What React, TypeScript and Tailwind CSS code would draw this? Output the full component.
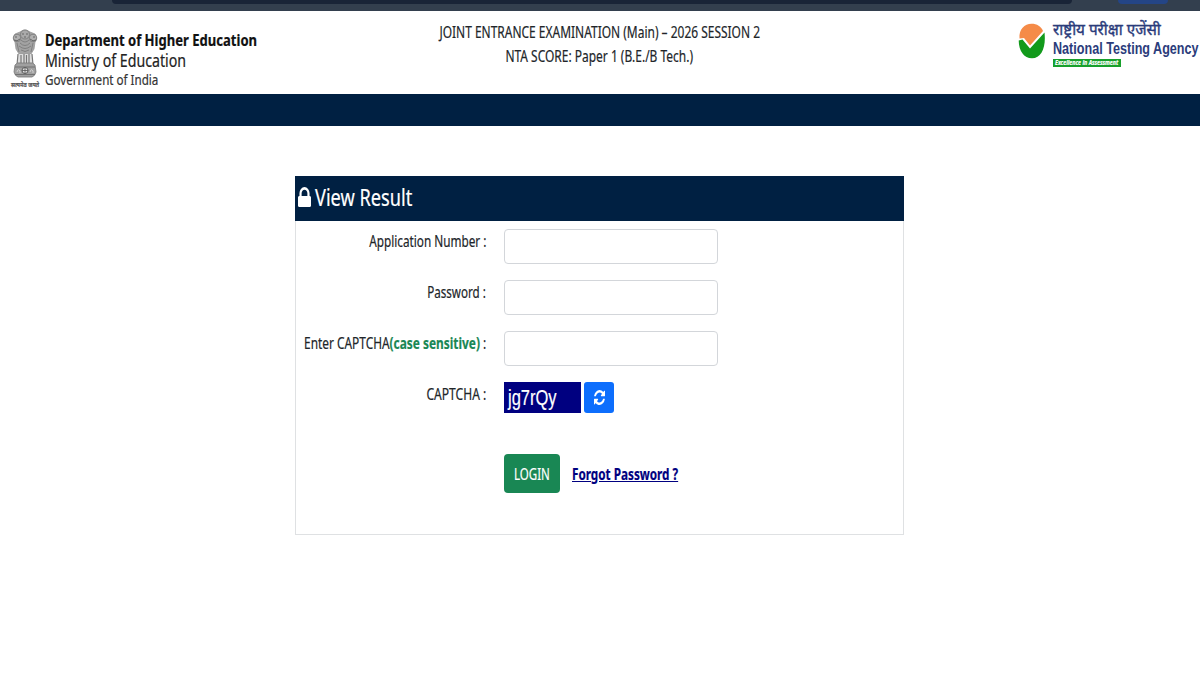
import { useState, type ReactNode } from "react";

// Narrow text: the box keeps its own width, the glyphs are squeezed inside it
function Narrow({ children, className = "", scale }: { children: ReactNode; className?: string; scale: string }) {
  return (
    <div className={`flex whitespace-nowrap ${className}`}>
      <span className={`block shrink-0 ${scale}`}>{children}</span>
    </div>
  );
}

function Emblem() {
  return (
    <svg viewBox="0 0 26 49" className="h-[49px] w-[26px]" fill="none" stroke="#777" strokeWidth="0.8">
      <path d="M8 3 Q13-1 18 3 L23 5 Q26 9 23 13 L22 20 L19 25 L7 25 L4 20 L3 13 Q0 9 3 5 Z" fill="#a3a3a3" stroke="#999" />
      <circle cx="13" cy="5.500" r="4.500" fill="#aaa" />
      <circle cx="5" cy="9" r="3.800" fill="#b0b0b0" />
      <circle cx="21" cy="9" r="3.800" fill="#b0b0b0" />
      <path d="M10 5h2M14 5h2M12 8h2M3 8h2M21 8h2M2 11q3 2 6-1M24 11q-3 2-6-1" stroke="#555" />
      <path d="M9 11q4 4 8 0M8 14q5 5 10 0M7 17q6 5 12 0M9 21q4 3 8 0M5 14l2 9M21 14l-2 9" />
      <path d="M6 25h14l1 12H5z" fill="#dedede" stroke="none" />
      <path d="M6 25l-1 11M9 26v9M12 25v10M14.500 26v9M17 25v10M20 25l1 11" stroke="#777" strokeWidth="1.200" />
      <path d="M3 36q2-3 6-2h8q4-1 6 2l1 7q-1 4-4 5H6q-3-1-4-5z" fill="#a0a0a0" stroke="#777" />
      <path d="M3 38h20M3 45.500h20" stroke="#666" />
      <circle cx="13" cy="41.500" r="3" fill="#ddd" stroke="#444" />
      <path d="M10 41.500h6M13 38.500v6" stroke="#555" />
      <path d="M5 43q1-4 3-1v2M18 43q1-4 3-1v2" stroke="#ddd" />
    </svg>
  );
}

function NtaLogo() {
  return (
    <svg viewBox="0 0 28 36" className="h-9 w-7">
      <path d="M1.500 15.500C.8 6.500 6.500.8 13.500.8c5.500 0 9.800 2.700 11.500 7.200L12 22.500 6 15Z" fill="#f58b48" />
      <path d="M.7 17.500 4.500 16.500 12 25.500 26.500 9.500C28.200 24 23.500 35.300 14 35.300 6 35.300.8 28 .7 17.500Z" fill="#129a1b" />
    </svg>
  );
}

function LockIcon() {
  return (
    <svg viewBox="320 128 1152 1408" preserveAspectRatio="none" className="mb-[3px] h-5 w-[13px]" fill="currentColor">
      <path d="M640 768h512v-192q0-106-75-181t-181-75-181 75-75 181v192zm832 96v576q0 40-28 68t-68 28h-960q-40 0-68-28t-28-68v-576q0-40 28-68t68-28h32v-192q0-184 132-316t316-132 316 132 132 316v192h32q40 0 68 28t28 68z" />
    </svg>
  );
}

function RefreshIcon() {
  return (
    <svg viewBox="0 0 1536 1536" preserveAspectRatio="none" className="h-[15px] w-[11px]" fill="currentColor">
      <path d="M1511 928q0 5-1 7-64 268-268 434.500t-478 166.500q-146 0-282.500-55t-243.500-157l-129 129q-19 19-45 19t-45-19-19-45v-448q0-26 19-45t45-19h448q26 0 45 19t19 45-19 45l-137 137q71 66 161 102t187 36q134 0 250-65t186-179q11-17 53-117 8-23 30-23h192q13 0 22.500 9.500t9.500 22.500zm25-800v448q0 26-19 45t-45 19h-448q-26 0-45-19t-19-45 19-45l138-138q-148-137-349-137-134 0-250 65t-186 179q-11 17-53 117-8 23-30 23h-199q-13 0-22.500-9.500t-9.500-22.500v-7q65-268 270-434.500t480-166.500q146 0 284 55.500t245 156.500l130-129q19-19 45-19t45 19 19 45z" />
    </svg>
  );
}

function Field({ label, scale, children }: { label: ReactNode; scale: string; children: ReactNode }) {
  return (
    <div className="flex h-[51px] items-start">
      <Narrow className="w-[190px] justify-end text-base leading-[25px]" scale={`origin-right ${scale}`}>
        {label}
      </Narrow>
      <div className="ml-[18px] flex">{children}</div>
    </div>
  );
}

const inputClass = "h-[35px] w-[214px] rounded border border-[#d3d6da] bg-white px-2 text-base outline-none";

export default function App() {
  const [form, setForm] = useState({ appNo: "", password: "", captcha: "" });

  return (
    <div className="h-[675px] w-[1200px] overflow-hidden bg-white font-['Noto_Sans','Open_Sans',sans-serif] text-[#212529] [-webkit-text-stroke:0.2px]">
      {/* browser bar */}
      <div className="flex h-[11px] items-start bg-[#333f4e]">
        <div className="ml-[112px] h-1 w-[960px] rounded-b-lg bg-[#192437]" />
        <div className="ml-[46px] h-1 w-[50px] rounded-b-sm bg-[#244586]" />
      </div>

      {/* header */}
      <header className="flex h-[83px]">
        <div className="flex w-[399px] pl-[11px] pt-[18px]">
          <div className="flex w-7 flex-col items-center">
            <Emblem />
            <Narrow className="mt-[2px] w-7 text-[7px] leading-[10px] font-bold text-[#555]" scale="origin-left scale-x-[0.770]">सत्यमेव जयते</Narrow>
          </div>
          <div className="ml-[6px] w-[220px]">
            <Narrow className="text-base leading-[22px] font-bold text-[#111]" scale="origin-left scale-x-[0.816]">Department of Higher Education</Narrow>
            <Narrow className="text-[18px] leading-[19px] text-[#222]" scale="origin-left scale-x-[0.788]">Ministry of Education</Narrow>
            <Narrow className="text-[15px] leading-[18px] text-[#333]" scale="origin-left scale-x-[0.775]">Government of India</Narrow>
          </div>
        </div>

        <div className="flex w-[401px] flex-col items-center pt-2 text-[17px]">
          <Narrow className="leading-[25px]" scale="scale-x-[0.704]">JOINT ENTRANCE EXAMINATION (Main) – 2026 SESSION 2</Narrow>
          <Narrow className="leading-6" scale="scale-x-[0.704]">NTA SCORE: Paper 1 (B.E./B Tech.)</Narrow>
        </div>

        <div className="ml-auto flex w-[182px] pt-3">
          <NtaLogo />
          <div className="ml-[7px] -mt-1 w-[146px] text-[#2b3c7b]">
            <Narrow className="text-base leading-5 [-webkit-text-stroke:0.4px]" scale="origin-left scale-x-[0.955]">राष्ट्रीय परीक्षा एजेंसी</Narrow>
            <Narrow className="font-['Liberation_Sans',sans-serif] text-base leading-[19px] font-bold [-webkit-text-stroke:0]" scale="origin-left scale-x-[0.787]">National Testing Agency</Narrow>
            <Narrow className="mt-px h-2 w-[68px] bg-[#18a02c] pl-[2px] text-[7px] leading-2 font-bold text-white italic" scale="origin-left scale-x-[0.760]">Excellence in Assessment</Narrow>
          </div>
        </div>
      </header>
      <div className="h-8 bg-[#002042]" />

      {/* login card */}
      <main className="mt-[50px] ml-[295px] h-[359px] w-[609px] border border-t-0 border-[#dfe1e3]">
        <div className="-mx-px flex h-[45px] items-center bg-[#002042] pl-[3px] text-white">
          <LockIcon />
          <Narrow className="ml-[4px] pb-[2px] text-[23px] leading-[43px]" scale="origin-left scale-x-[0.790]">View Result</Narrow>
        </div>
        <form className="pt-2" onSubmit={(e) => e.preventDefault()}>
          <Field label="Application Number :" scale="scale-x-[0.735]">
            <input className={inputClass} value={form.appNo} onChange={(e) => setForm({ ...form, appNo: e.target.value })} />
          </Field>
          <Field label="Password :" scale="scale-x-[0.725]">
            <input type="password" className={inputClass} value={form.password} onChange={(e) => setForm({ ...form, password: e.target.value })} />
          </Field>
          <Field label={<>Enter CAPTCHA<b className="text-[#198754]">(case sensitive)</b> :</>} scale="scale-x-[0.743]">
            <input className={inputClass} value={form.captcha} onChange={(e) => setForm({ ...form, captcha: e.target.value })} />
          </Field>
          <Field label="CAPTCHA :" scale="scale-x-[0.755]">
            <Narrow className="h-[31px] w-[77px] bg-[#000080] pl-1 font-['Liberation_Sans',sans-serif] text-[22px] leading-[31px] text-white" scale="origin-left scale-x-[0.750]">jg7rQy</Narrow>
            <button type="button" className="ml-[3px] flex h-[31px] w-[30px] items-center justify-center rounded-[3px] bg-[#0d6efd] text-white">
              <RefreshIcon />
            </button>
          </Field>
          <div className="mt-[21px] ml-[208px] flex items-center">
            <button className="flex h-[39px] w-14 items-center justify-center rounded-[4px] bg-[#198754] text-base text-white">
              <span className="scale-x-[0.720]">LOGIN</span>
            </button>
            <a href="#" className="ml-3 w-[107px] text-base font-bold text-[#000080]">
              <Narrow scale="origin-left scale-x-[0.732] underline">Forgot Password ?</Narrow>
            </a>
          </div>
        </form>
      </main>
    </div>
  );
}
